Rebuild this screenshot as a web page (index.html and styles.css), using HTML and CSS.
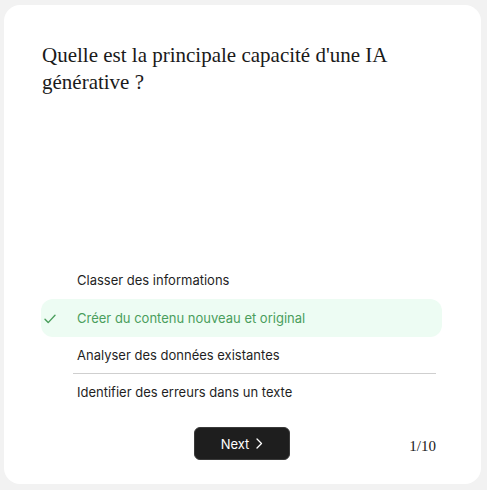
FILE: index.html
```html
<!DOCTYPE html>
<html lang="fr">
<head>
<meta charset="utf-8">
<link rel="stylesheet" href="styles.css">
</head>
<body>
<div class="card">
  <h1 class="question">Quelle est la principale capacité d'une IA générative ?</h1>
  <ul class="options">
    <li class="option">Classer des informations</li>
    <li class="option selected">
      <svg class="check" width="12" height="10" viewBox="0 0 12 10"><path d="M1 5.2 L4.2 8.6 L11 1.2" fill="none" stroke="#4a9e5c" stroke-width="1.4" stroke-linecap="round" stroke-linejoin="round"/></svg>
      Créer du contenu nouveau et original</li>
    <li class="option divided">Analyser des données existantes</li>
    <li class="option">Identifier des erreurs dans un texte</li>
  </ul>
  <div class="footer">
    <button class="next">Next
      <svg width="8" height="11" viewBox="0 0 8 11"><path d="M2 1 L6.5 5.5 L2 10" fill="none" stroke="#fff" stroke-width="1.3" stroke-linecap="round" stroke-linejoin="round"/></svg>
    </button>
    <span class="count">1/10</span>
  </div>
</div>
</body>
</html>
```
FILE: styles.css
```css
html, body { margin: 0; padding: 0; }
body {
  background: #f2f2f2;
  width: 487px;
  height: 490px;
  overflow: hidden;
}
.card {
  box-sizing: border-box;
  margin: 5px 6px 0 4px;
  height: 479px;
  background: #fff;
  border-radius: 16px;
  padding: 37px 39px 24px 37px;
  display: flex;
  flex-direction: column;
}
.question {
  margin: 0 0 0 1px;
  font-family: "Liberation Serif", "DejaVu Serif", serif;
  font-weight: 400;
  font-size: 21px;
  line-height: 27px;
  color: #1a1a1a;
  max-width: 360px;
}
.options {
  list-style: none;
  margin: auto 0 0 0;
  padding: 0;
  font-family: Inter, "Noto Sans", sans-serif;
  font-size: 13px;
  color: #1f1f1f;
}
.option {
  position: relative;
  height: 37px;
  line-height: 37px;
  padding-left: 36px;
  border-radius: 12px;
}
.option.selected {
  height: 38px;
  line-height: 38px;
  background: #edfcf3;
  color: #4a9e5c;
}
.check {
  position: absolute;
  left: 3px;
  top: 15px;
}
.option.divided {
  border-bottom: 1px solid #cfcfcf;
  border-radius: 0;
  margin-left: 32px;
  margin-right: 6px;
  padding-left: 4px;
  height: 36px;
}
.footer {
  margin-top: 16px;
  display: flex;
  align-items: center;
  justify-content: space-between;
  padding-left: 153px;
  padding-right: 6px;
}
.next {
  box-sizing: border-box;
  width: 96px;
  height: 33px;
  background: #1e1e1e;
  border: 1px solid #3a3a3a;
  border-radius: 6px;
  color: #fff;
  font-family: Inter, "Noto Sans", sans-serif;
  font-size: 13px;
  display: flex;
  align-items: center;
  justify-content: center;
  gap: 6px;
  padding: 0;
}
.count {
  font-family: "Liberation Serif", "DejaVu Serif", serif;
  font-size: 15px;
  color: #1a1a1a;
  margin-top: 6px;
}
```
